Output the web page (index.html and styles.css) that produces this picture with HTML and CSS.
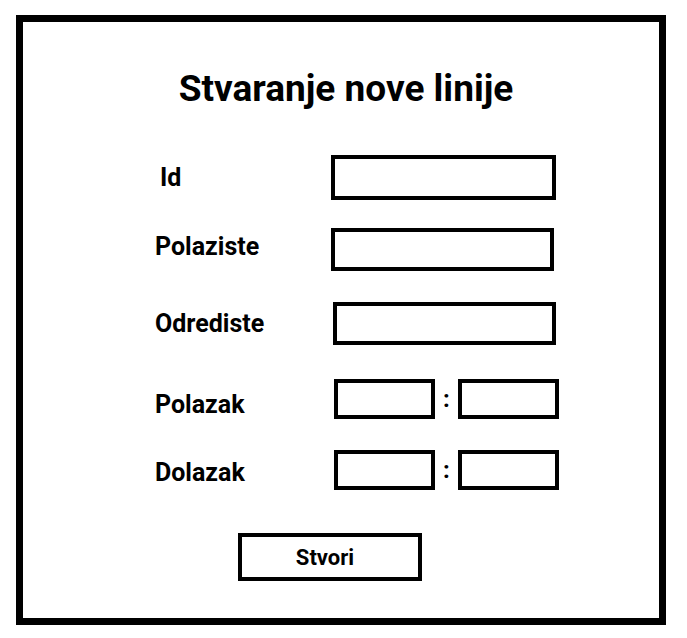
FILE: index.html
```html
<!DOCTYPE html>
<html lang="hr">
<head>
    <meta charset="UTF-8">
    <meta name="viewport" content="width=device-width, initial-scale=1.0">
    <title>Stvaranje nove linije</title>
    <link rel="stylesheet" href="styles.css">
</head>
<body>
    <div class="frame">
        <h1>Stvaranje nove linije</h1>
        <form id="line-form">
            <div class="form-row row-id">
                <label for="id">Id</label>
                <input type="text" id="id" name="id">
            </div>
            <div class="form-row row-from">
                <label for="polaziste">Polaziste</label>
                <input type="text" id="polaziste" name="polaziste">
            </div>
            <div class="form-row row-to">
                <label for="odrediste">Odrediste</label>
                <input type="text" id="odrediste" name="odrediste">
            </div>
            <div class="form-row row-time row-depart">
                <label for="polazak-h">Polazak</label>
                <div class="time-group">
                    <input type="text" id="polazak-h" name="polazak-h">
                    <span class="colon">:</span>
                    <input type="text" id="polazak-m" name="polazak-m">
                </div>
            </div>
            <div class="form-row row-time row-arrive">
                <label for="dolazak-h">Dolazak</label>
                <div class="time-group">
                    <input type="text" id="dolazak-h" name="dolazak-h">
                    <span class="colon">:</span>
                    <input type="text" id="dolazak-m" name="dolazak-m">
                </div>
            </div>
            <button type="submit">Stvori</button>
        </form>
    </div>
</body>
</html>
```

FILE: styles.css
```css
body {
    margin: 0;
    padding: 0;
    background: #fff;
    color: #000;
    font-family: Roboto, "Liberation Sans", sans-serif;
}
.frame {
    box-sizing: border-box;
    width: 650px;
    height: 610px;
    margin: 15px 0 0 16px;
    border: 7px solid #000;
}
h1 {
    margin: 46px 0 0 0;
    padding-left: 10px;
    font-size: 37px;
    line-height: 42px;
    font-weight: bold;
    text-align: center;
}
#line-form {
    margin-top: 45px;
    padding-left: 132px;
}
.form-row {
    display: flex;
    align-items: center;
}
.form-row label {
    width: 176px;
    font-size: 25px;
    font-weight: bold;
}
.form-row input {
    box-sizing: border-box;
    width: 225px;
    height: 45px;
    border: 4px solid #000;
    border-radius: 0;
    background: #fff;
    padding: 0 6px;
    outline: none;
}
.row-id label {
    padding-left: 5px;
    width: 171px;
}
.row-from {
    margin-top: 28px;
}
.row-from label {
    padding-bottom: 6px;
}
.row-from input {
    width: 223px;
    height: 43px;
}
.row-to {
    margin-top: 31px;
}
.row-to input {
    width: 223px;
    height: 43px;
    margin-left: 2px;
}
.row-time {
    margin-top: 33px;
}
.row-depart label {
    padding-top: 12px;
}
.row-arrive {
    margin-top: 31px;
}
.row-arrive label {
    padding-top: 4px;
}
.time-group {
    display: flex;
    align-items: center;
    margin-left: 3px;
}
.time-group input {
    width: 101px;
    height: 40px;
}
.colon {
    width: 23px;
    text-align: center;
    font-size: 24px;
    font-weight: bold;
}
#line-form button {
    display: block;
    box-sizing: border-box;
    width: 184px;
    height: 48px;
    margin: 43px 0 0 83px;
    padding-right: 16px;
    border: 4px solid #000;
    border-radius: 0;
    background: #fff;
    color: #000;
    font-family: inherit;
    font-size: 22px;
    font-weight: bold;
    cursor: pointer;
}
```
